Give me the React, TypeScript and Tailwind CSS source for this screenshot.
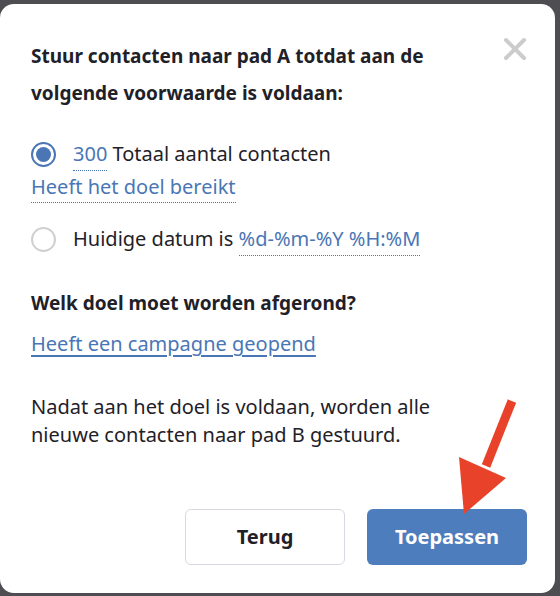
import React from 'react';

function Radio({ checked }: { checked?: boolean }) {
  if (checked) {
    return (
      <span className="flex h-[25px] w-[25px] shrink-0 items-center justify-center rounded-full border-2 border-[#4a76b5] bg-white">
        <span className="h-[15px] w-[15px] rounded-full bg-[#4a76b5]"></span>
      </span>
    );
  }
  return <span className="h-[25px] w-[25px] shrink-0 rounded-full border-2 border-[#d0d0d0] bg-white"></span>;
}

export default function App() {
  return (
    <div className="relative h-[596px] w-[560px] overflow-hidden bg-[#4d4d52] pt-[4px] font-['Noto_Sans',sans-serif]">
      <div className="relative h-[589px] w-[555px] rounded-[14px] bg-white px-[31px] pt-[34px] text-[#1f2128]">
        {/* Close */}
        <button className="absolute right-[28px] top-[33px] text-[#cccccc]">
          <svg width="24" height="24" viewBox="0 0 24 24">
            <path d="M3 3 L21 21 M21 3 L3 21" stroke="currentColor" strokeWidth="4" strokeLinecap="round" />
          </svg>
        </button>

        {/* Heading */}
        <h2 className="text-[19px] font-bold leading-[37px]">
          Stuur contacten naar pad A totdat aan de
          <br />
          volgende voorwaarde is voldaan:
        </h2>

        {/* Option 1 */}
        <div className="mt-[26px] flex items-center text-[20px] leading-[32px]">
          <Radio checked />
          <span className="ml-[17px]">
            <span className="inline-block border-b border-dotted border-[#4a76b5] leading-[32px] text-[#4a76b5]">300</span>{' '}
            Totaal aantal contacten
          </span>
        </div>
        <div className="text-[20px] leading-[32px]">
          <span className="inline-block border-b border-dotted border-[#4a76b5] leading-[31px] text-[#4a76b5]">Heeft het doel bereikt</span>
        </div>

        {/* Option 2 */}
        <div className="mt-[20px] flex items-center text-[20px] leading-[32px]">
          <Radio />
          <span className="ml-[17px]">
            Huidige datum is{' '}
            <span className="inline-block border-b border-dotted border-[#4a76b5] leading-[32px] text-[#4a76b5]">%d-%m-%Y %H:%M</span>
          </span>
        </div>

        {/* Goal */}
        <h3 className="mt-[32px] text-[19px] font-bold leading-[30px]">Welk doel moet worden afgerond?</h3>
        <a className="mt-[10px] block text-[20px] leading-[32px] text-[#4a76b5] underline underline-offset-[4px]">
          Heeft een campagne geopend
        </a>

        <p className="mt-[33px] text-[20px] leading-[28px]">
          Nadat aan het doel is voldaan, worden alle
          <br />
          nieuwe contacten naar pad B gestuurd.
        </p>

        {/* Footer */}
        <div className="absolute bottom-[28px] right-[28px] flex gap-[22px]">
          <button className="h-[56px] w-[160px] rounded-[6px] border border-[#d6d9e2] bg-white text-[20px] font-bold text-[#1f2128]">
            Terug
          </button>
          <button className="h-[56px] w-[160px] rounded-[6px] bg-[#4e7dbd] text-[20px] font-bold text-white">
            Toepassen
          </button>
        </div>
      </div>

      {/* Annotation arrow */}
      <svg className="pointer-events-none absolute left-0 top-0" width="560" height="596">
        <line x1="512" y1="401" x2="486" y2="466" stroke="#e8432a" strokeWidth="9" />
        <polygon points="459,457 506,478 464,514" fill="#e8432a" />
      </svg>
    </div>
  );
}
